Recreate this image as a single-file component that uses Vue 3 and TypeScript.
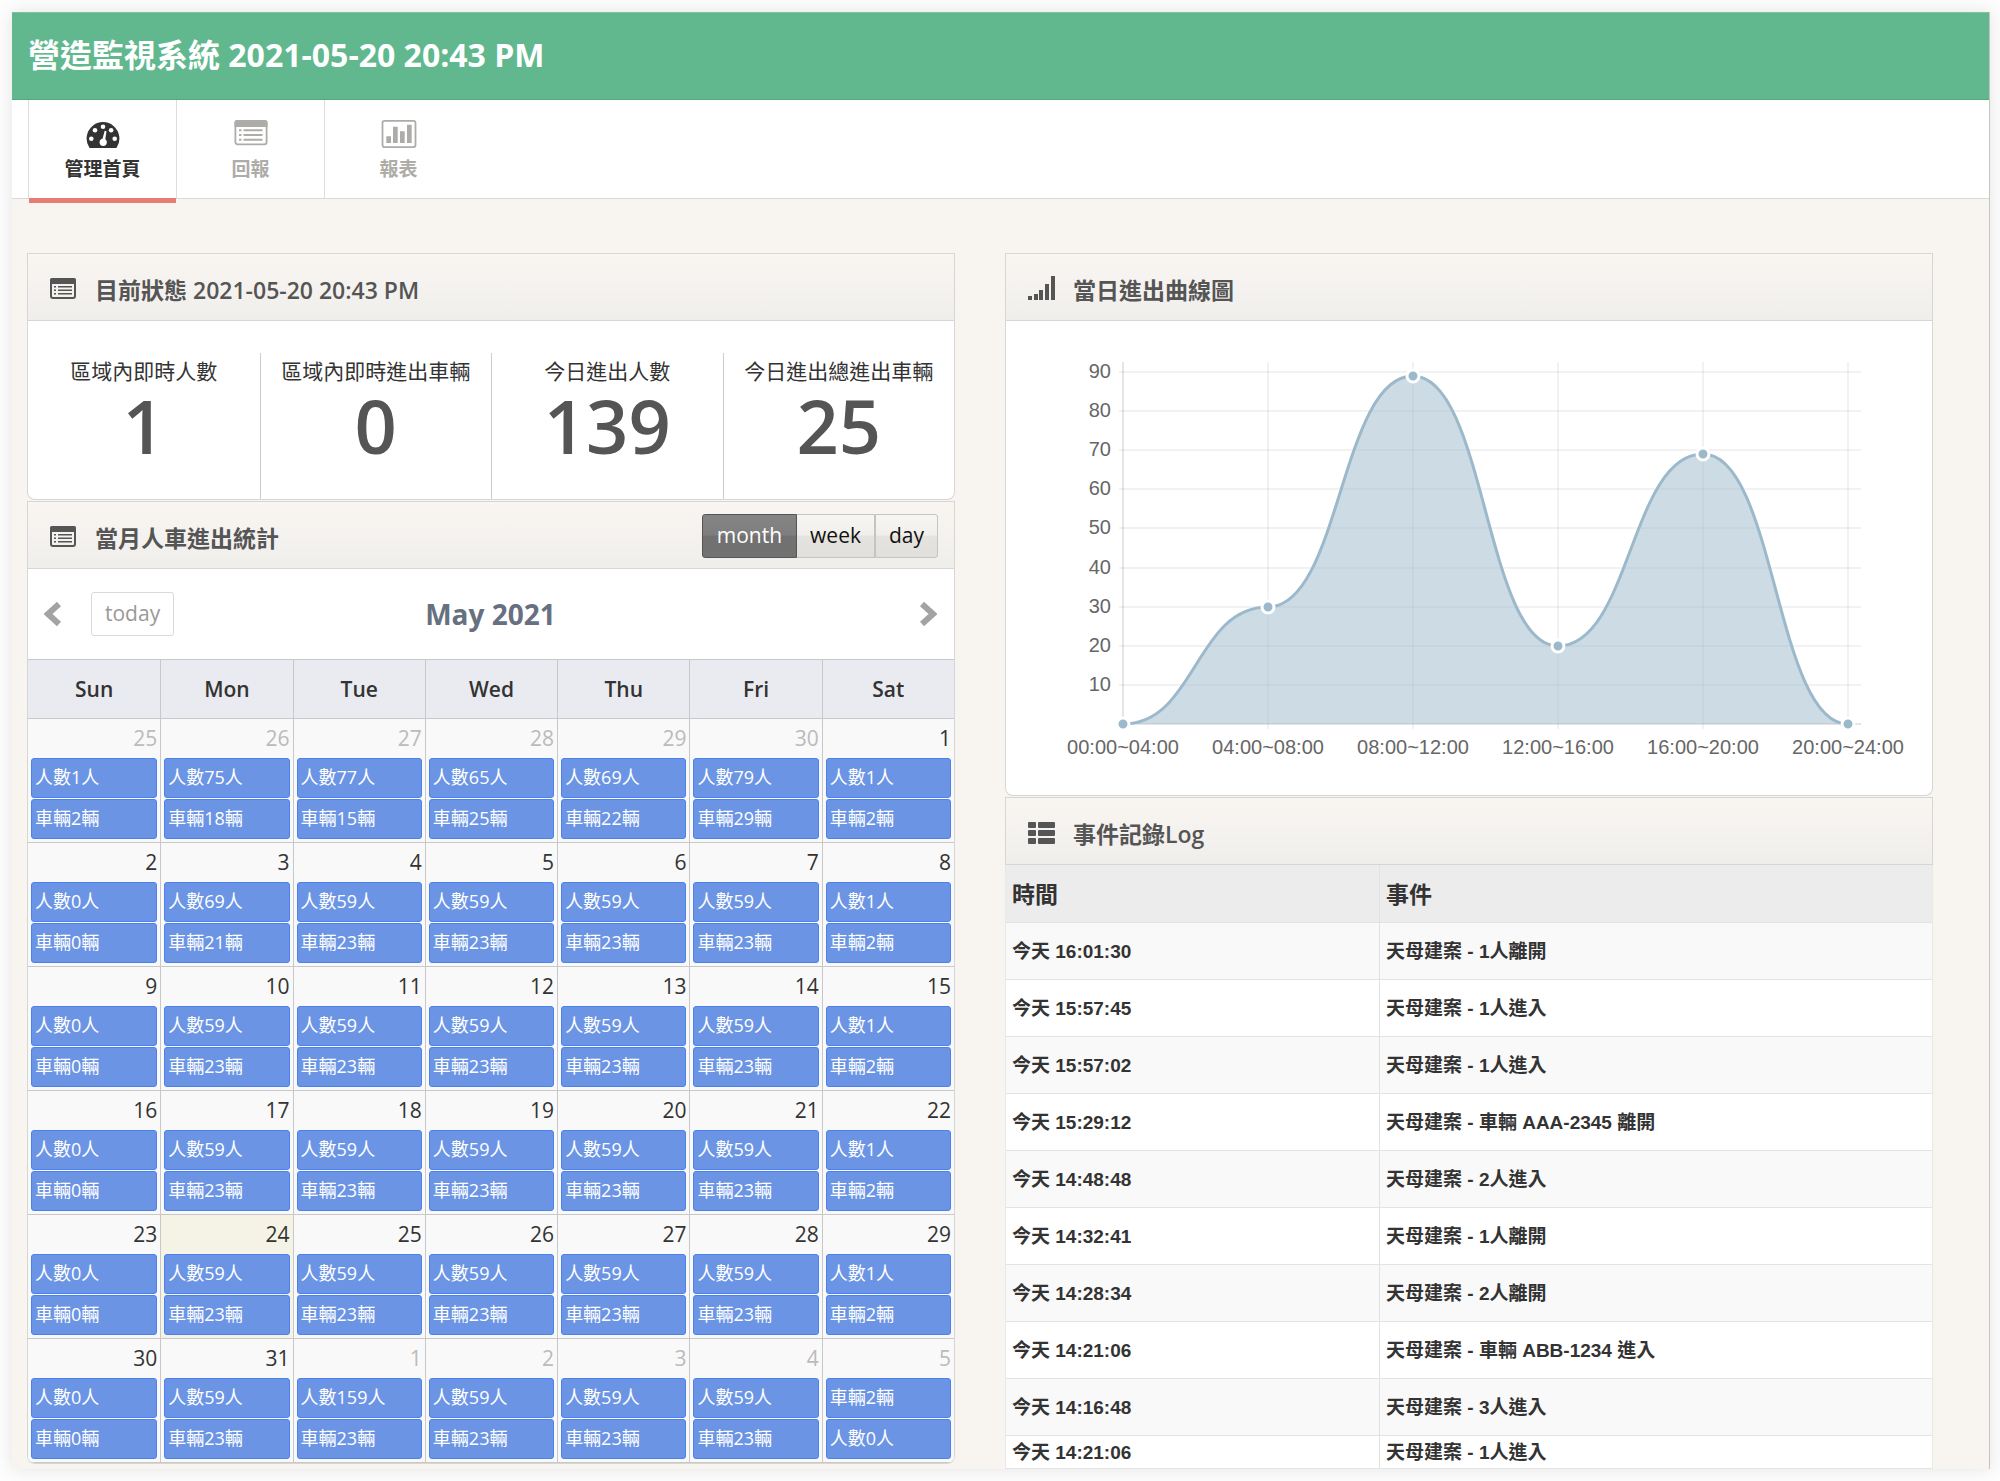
<script setup lang="ts">
interface Day {
  date: number
  muted: boolean
  today: boolean
  events: string[]
}

const tabs = [
  { id: 'home', label: '管理首頁' },
  { id: 'report', label: '回報' },
  { id: 'chart', label: '報表' },
]

const stats = [
  { label: '區域內即時人數', value: 1 },
  { label: '區域內即時進出車輛', value: 0 },
  { label: '今日進出人數', value: 139 },
  { label: '今日進出總進出車輛', value: 25 },
]

const views = ['month', 'week', 'day']
const weekdays = ['Sun', 'Mon', 'Tue', 'Wed', 'Thu', 'Fri', 'Sat']

const firstWeek: [number, number][] = [[1, 2], [75, 18], [77, 15], [65, 25], [69, 22], [79, 29], [1, 2]]
const usualWeek: [number, number][] = [[0, 0], [59, 23], [59, 23], [59, 23], [59, 23], [59, 23], [1, 2]]
const secondWeek: [number, number][] = usualWeek.map((c, i) => (i === 1 ? [69, 21] : c))
const lastWeek: [number, number][] = usualWeek.map((c, i) => (i === 2 ? [159, 23] : i === 6 ? [0, 2] : c))
const counts = [firstWeek, secondWeek, usualWeek, usualWeek, usualWeek, lastWeek]

const weeks: Day[][] = counts.map((week, w) =>
  week.map(([people, cars], d) => {
    const offset = w * 7 + d - 5
    const date = offset < 1 ? offset + 30 : offset > 31 ? offset - 31 : offset
    const events = [`人數${people}人`, `車輛${cars}輛`]
    if (w === 5 && d === 6) events.reverse()
    return { date, muted: offset < 1 || offset > 31, today: offset === 24, events }
  }),
)

const logs = [
  ['16:01:30', '1人離開'],
  ['15:57:45', '1人進入'],
  ['15:57:02', '1人進入'],
  ['15:29:12', '車輛 AAA-2345 離開'],
  ['14:48:48', '2人進入'],
  ['14:32:41', '1人離開'],
  ['14:28:34', '2人離開'],
  ['14:21:06', '車輛 ABB-1234 進入'],
  ['14:16:48', '3人進入'],
  ['14:21:06', '1人進入'],
]

const slots = ['00:00~04:00', '04:00~08:00', '08:00~12:00', '12:00~16:00', '16:00~20:00', '20:00~24:00']
const traffic = [0, 30, 89, 20, 69, 0]
const ticks = [10, 20, 30, 40, 50, 60, 70, 80, 90]
const baseY = 403
const px = (i: number) => 117 + i * 145
const py = (v: number) => Math.round(baseY - (v * 352) / 90)

const points = traffic.map((v, i) => ({ x: px(i), y: py(v) }))
const line = points.reduce((d, p, i) => {
  if (i === 0) return `M${p.x} ${p.y}`
  const prev = points[i - 1]
  const mid = (prev.x + p.x) / 2
  return `${d} C${mid} ${prev.y} ${mid} ${p.y} ${p.x} ${p.y}`
}, '')
</script>

<template>
  <div class="frame">
    <header class="topbar">
      <h1>營造監視系統 2021-05-20 20:43 PM</h1>
    </header>

    <nav class="tabs">
      <a v-for="(tab, i) in tabs" :key="tab.id" href="#" class="tab" :class="{ active: i === 0 }">
        <svg v-if="tab.id === 'home'" class="tab-icon" viewBox="0 0 36 28" aria-hidden="true">
          <path fill="currentColor" d="M4.300 27.500A16.400 16.400 0 1 1 31.700 27.500Q31.300 28 30.700 28H5.300Q4.700 28 4.300 27.500Z" />
          <g fill="#fff">
            <circle cx="6.300" cy="18.700" r="2.300" /><circle cx="10" cy="10.300" r="2.300" />
            <circle cx="18" cy="6.700" r="2.300" /><circle cx="26.100" cy="10.300" r="2.300" />
            <circle cx="29.700" cy="18.700" r="2.300" /><circle cx="18.200" cy="22.300" r="3.600" />
            <path d="M16.900 21L19.700 10.800L21.500 11.300L19.900 22Z" />
          </g>
        </svg>
        <svg v-else-if="tab.id === 'report'" class="tab-icon" viewBox="0 0 36 28" aria-hidden="true">
          <rect x="2.400" y="0.900" width="31.200" height="23.400" rx="2" fill="none" stroke="currentColor" stroke-width="1.800" />
          <path fill="currentColor" d="M1.500 2.500Q1.500 0 4 0H32Q34.500 0 34.500 2.500V7H1.500ZM6 9.300H8.500V11.300H6ZM6 14H8.500V16H6ZM6 18.700H8.500V20.700H6ZM10.500 9.300H29.500V11.300H10.500ZM10.500 14H29.500V16H10.500ZM10.500 18.700H29.500V20.700H10.500Z" />
        </svg>
        <svg v-else class="tab-icon" viewBox="0 0 36 28" aria-hidden="true">
          <rect x="1.500" y="0.900" width="33" height="26.200" rx="2" fill="none" stroke="currentColor" stroke-width="1.800" />
          <path fill="currentColor" d="M5.300 16.300H10V23H5.300ZM12 6.700H16.700V23H12ZM19 11.300H23.700V23H19ZM26 4.700H30.700V23H26Z" />
        </svg>
        <span>{{ tab.label }}</span>
      </a>
    </nav>

    <main class="columns">
      <div class="column">
        <section class="panel">
          <div class="panel-head">
            <svg class="head-icon" viewBox="0 -2 27 24" aria-hidden="true">
              <rect x="1" y="1" width="24" height="19" rx="2" fill="none" stroke="currentColor" stroke-width="2" />
              <path fill="currentColor" d="M0 2Q0 0 2 0H24Q26 0 26 2V6H0ZM4 8H6V9.500H4ZM4 11.500H6V13H4ZM4 15H6V16.500H4ZM8 8H22V9.500H8ZM8 11.500H22V13H8ZM8 15H22V16.500H8Z" />
            </svg>
            <h2>目前狀態 2021-05-20 20:43 PM</h2>
          </div>
          <div class="panel-body stats">
            <div v-for="s in stats" :key="s.label" class="stat">
              <span class="stat-label">{{ s.label }}</span>
              <strong>{{ s.value }}</strong>
            </div>
          </div>
        </section>

        <section class="panel">
          <div class="panel-head">
            <svg class="head-icon" viewBox="0 -2 27 24" aria-hidden="true">
              <rect x="1" y="1" width="24" height="19" rx="2" fill="none" stroke="currentColor" stroke-width="2" />
              <path fill="currentColor" d="M0 2Q0 0 2 0H24Q26 0 26 2V6H0ZM4 8H6V9.500H4ZM4 11.500H6V13H4ZM4 15H6V16.500H4ZM8 8H22V9.500H8ZM8 11.500H22V13H8ZM8 15H22V16.500H8Z" />
            </svg>
            <h2>當月人車進出統計</h2>
            <div class="views">
              <button v-for="(v, i) in views" :key="v" type="button" :class="{ on: i === 0 }">{{ v }}</button>
            </div>
          </div>
          <div class="panel-body">
            <div class="toolbar">
              <div class="toolbar-left">
                <button type="button" class="arrow" aria-label="previous">
                  <svg viewBox="0 0 18 26" aria-hidden="true"><path d="M15 3L4 13L15 23" /></svg>
                </button>
                <button type="button" class="today">today</button>
              </div>
              <h3>May 2021</h3>
              <button type="button" class="arrow next" aria-label="next">
                <svg viewBox="0 0 18 26" aria-hidden="true"><path d="M3 3L14 13L3 23" /></svg>
              </button>
            </div>
            <table class="calendar">
              <thead>
                <tr>
                  <th v-for="d in weekdays" :key="d" scope="col">{{ d }}</th>
                </tr>
              </thead>
              <tbody>
                <tr v-for="(week, w) in weeks" :key="w">
                  <td v-for="day in week" :key="day.date" :class="{ current: day.today }">
                    <div class="date" :class="{ muted: day.muted }">{{ day.date }}</div>
                    <a v-for="e in day.events" :key="e" href="#" class="event">{{ e }}</a>
                  </td>
                </tr>
              </tbody>
            </table>
          </div>
        </section>
      </div>

      <div class="column">
        <section class="panel">
          <div class="panel-head">
            <svg class="head-icon" viewBox="0 0 27 24" aria-hidden="true">
              <path fill="currentColor" d="M0 20H4V24H0ZM6 18H10V24H6ZM11 14H15V24H11ZM17 8H21V24H17ZM23 0H27V24H23Z" />
            </svg>
            <h2>當日進出曲線圖</h2>
          </div>
          <div class="panel-body">
            <svg class="chart" viewBox="0 0 926 474" role="img" aria-label="當日進出曲線圖">
              <g class="grid">
                <path v-for="t in ticks" :key="t" :d="`M113 ${py(t)}H855`" />
                <path v-for="(s, i) in slots.slice(1)" :key="s" :d="`M${px(i + 1)} 41V408`" />
              </g>
              <g class="axis">
                <path d="M117 41V408" />
                <path d="M113 403H855" />
              </g>
              <g class="labels">
                <text v-for="t in ticks" :key="t" x="105" :y="py(t) + 6" text-anchor="end">{{ t }}</text>
                <text v-for="(s, i) in slots" :key="s" :x="px(i)" y="433" text-anchor="middle">{{ s }}</text>
              </g>
              <path class="area" :d="`${line} Z`" />
              <path class="curve" :d="line" />
              <circle v-for="p in points" :key="p.x" class="dot" :cx="p.x" :cy="p.y" r="6" />
            </svg>
          </div>
        </section>

        <section class="panel">
          <div class="panel-head">
            <svg class="head-icon" viewBox="0 -2 27 24" aria-hidden="true">
              <g fill="currentColor">
                <rect y="0" width="8" height="6" rx="1" /><rect x="10" y="0" width="17" height="6" rx="1" />
                <rect y="8" width="8" height="6" rx="1" /><rect x="10" y="8" width="17" height="6" rx="1" />
                <rect y="16" width="8" height="6" rx="1" /><rect x="10" y="16" width="17" height="6" rx="1" />
              </g>
            </svg>
            <h2>事件記錄Log</h2>
          </div>
          <table class="log">
            <thead>
              <tr>
                <th scope="col" class="time">時間</th>
                <th scope="col">事件</th>
              </tr>
            </thead>
            <tbody>
              <tr v-for="(l, i) in logs" :key="i">
                <td>今天 {{ l[0] }}</td>
                <td>天母建案 - {{ l[1] }}</td>
              </tr>
            </tbody>
          </table>
        </section>
      </div>
    </main>
  </div>
</template>

<style>
body {
  background: #fdfdfd;
}
</style>

<style scoped>
.frame,
.frame * {
  box-sizing: border-box;
}
.frame {
  margin: 12px 10px 12px 12px;
  background: #f8f5f1;
  border-right: 1px solid #c4c4c4;
  box-shadow: 0 0 16px rgba(0, 0, 0, 0.1);
  font-family: "Open Sans", "Noto Sans CJK TC", sans-serif;
  color: #333;
}
h1,
h2,
h3 {
  margin: 0;
  font-weight: 600;
}
a {
  text-decoration: none;
}
button {
  font: inherit;
  cursor: pointer;
}

.topbar {
  height: 88px;
  padding: 6px 16px;
  border-top: 1px solid #82c2a2;
  border-bottom: 1px solid #56a881;
  background: #61b88e;
}
.topbar h1 {
  font-size: 32px;
  font-weight: 700;
  line-height: 72px;
  color: #fff;
}

.tabs {
  display: flex;
  height: 99px;
  padding-left: 16px;
  background: #fff;
  border-bottom: 1px solid #d9d9d9;
}
.tab {
  position: relative;
  display: flex;
  flex-direction: column;
  align-items: center;
  width: 148px;
  padding-top: 20px;
  border-left: 1px solid #ddd;
  font-size: 19px;
  font-weight: 700;
  line-height: 26px;
  color: #aeaca8;
}
.tab-icon {
  width: 36px;
  height: 28px;
  margin-bottom: 8px;
}
.tab.active {
  color: #333;
}
.tab.active::after {
  content: "";
  position: absolute;
  left: 0;
  right: 0;
  bottom: -5px;
  height: 5px;
  background: #e67c73;
}

.columns {
  display: grid;
  grid-template-columns: 1fr 1fr;
  gap: 50px;
  padding: 54px 56px 0 15px;
}
.column {
  display: flex;
  flex-direction: column;
  gap: 1px;
}
.panel-head {
  display: flex;
  align-items: center;
  height: 68px;
  padding: 2px 16px 0 22px;
  border: 1px solid #d6d6d6;
  background: linear-gradient(#f9f6f2, #f0eeeb);
  color: #555;
}
.head-icon {
  width: 27px;
  height: 24px;
  margin-right: 18px;
}
.panel-head h2 {
  flex: 1;
  padding-top: 4px;
  font-size: 23px;
  line-height: 32px;
}
.panel-body {
  border: 1px solid #d6d6d6;
  border-top: 0;
  border-radius: 0 0 8px 8px;
  background: #fff;
  overflow: hidden;
}

.stats {
  display: grid;
  grid-template-columns: repeat(4, 1fr);
  padding-top: 32px;
}
.stat {
  display: flex;
  flex-direction: column;
  height: 146px;
  text-align: center;
}
.stat + .stat {
  border-left: 1px solid #ccc;
}
.stat-label {
  font-size: 21px;
  line-height: 36px;
}
.stat strong {
  font-size: 74px;
  font-weight: 600;
  line-height: 74px;
  color: #555;
}

.views {
  display: flex;
}
.views button {
  height: 44px;
  padding: 0 13px 2px;
  border: 1px solid #c4c4c4;
  border-left-width: 0;
  background: linear-gradient(#f8f6f2, #f1efeb 48%, #e5e3df 50%, #e2e0dc);
  font-size: 21px;
  color: #111;
}
.views button:last-child {
  border-radius: 0 3px 3px 0;
}
.views button + button + button {
  border-left-width: 1px;
}
.views .on {
  padding: 0 14px 2px;
  border: 1px solid #555;
  border-radius: 3px 0 0 3px;
  background: linear-gradient(#858585, #7e7e7e 48%, #717171 50%, #727272);
  color: #fff;
}

.toolbar {
  display: grid;
  grid-template-columns: 1fr auto 1fr;
  align-items: center;
  height: 90px;
  padding: 0 17px 0 16px;
}
.toolbar-left {
  display: flex;
  align-items: center;
  gap: 29px;
}
.toolbar h3 {
  font-size: 28px;
  font-weight: 700;
  line-height: 40px;
  color: #667080;
}
.arrow {
  display: flex;
  width: 18px;
  padding: 0;
  border: 0;
  background: none;
}
.arrow svg {
  width: 18px;
  height: 26px;
  fill: none;
  stroke: #a3a3a3;
  stroke-width: 6;
}
.next {
  justify-self: end;
}
.today {
  height: 44px;
  padding: 0 13px 2px;
  border: 1px solid #d9d9d9;
  border-radius: 3px;
  background: #fff;
  font-size: 21px;
  color: #999;
}

.calendar {
  width: 100%;
  table-layout: fixed;
  border-spacing: 0;
}
.calendar th {
  height: 60px;
  padding: 0;
  border: solid #c8c8c8;
  border-width: 1px 0;
  background: #eaebf1;
  font-size: 21px;
  font-weight: 600;
  line-height: 32px;
}
.calendar td {
  padding: 0 3px 3px;
  border-bottom: 1px solid #c8c8c8;
  background: #f9f9f9;
}
.calendar th + th,
.calendar td + td {
  border-left: 1px solid #c8c8c8;
}
.calendar .current {
  background: #f4f3e6;
}
.date {
  font-size: 21px;
  line-height: 39px;
  text-align: right;
}
.muted {
  color: #bbb;
}
.event {
  display: block;
  height: 40px;
  padding-left: 3px;
  border: 1px solid #4a80f0;
  border-radius: 3px;
  background: #6b95e4;
  font-size: 18px;
  line-height: 37px;
  color: #fff;
}
.event + .event {
  margin-top: 1px;
}

.chart {
  display: block;
  width: 100%;
}
.grid path {
  stroke: rgba(0, 0, 0, 0.05);
  stroke-width: 2;
}
.axis path {
  stroke: rgba(0, 0, 0, 0.1);
  stroke-width: 2;
}
.labels text {
  font-family: "Liberation Sans", Arial, sans-serif;
  font-size: 20px;
  fill: #666;
}
.area {
  fill: rgba(155, 184, 203, 0.5);
}
.curve {
  fill: none;
  stroke: #9bb9cb;
  stroke-width: 3;
}
.dot {
  fill: #9bb9cb;
  stroke: #fff;
  stroke-width: 3;
}

.log {
  width: 100%;
  table-layout: fixed;
  border-spacing: 0;
  border-left: 1px solid #e8e8e8;
  border-right: 1px solid #e8e8e8;
  background: #fff;
  text-align: left;
}
.log th {
  height: 58px;
  padding: 0 6px;
  border-bottom: 1px solid #e2e2e2;
  background: #ececec;
  font-size: 23px;
  font-weight: 700;
  line-height: 32px;
}
.log .time {
  width: 373px;
}
.log td {
  height: 57px;
  padding: 2px 6px 0;
  border-bottom: 1px solid #e4e4e4;
  font-family: "Liberation Sans", "Noto Sans CJK TC", sans-serif;
  font-size: 19px;
  font-weight: 700;
  line-height: 28px;
}
.log th + th,
.log td + td {
  border-left: 1px solid #e2e2e2;
}
.log tbody tr:nth-child(odd) {
  background: #f9f9f9;
}
.log tbody tr:last-child td {
  height: 33px;
}
</style>
